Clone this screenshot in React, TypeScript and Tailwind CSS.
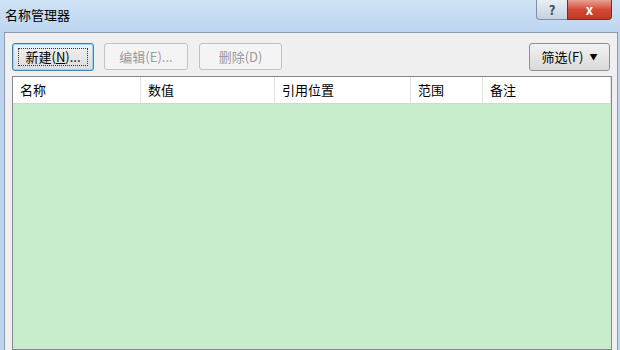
export default function App() {
  const cols = [
    { label: "名称", w: "w-[128px]" },
    { label: "数值", w: "w-[134px]" },
    { label: "引用位置", w: "w-[136px]" },
    { label: "范围", w: "w-[72px]" },
    { label: "备注", w: "flex-1" },
  ];

  return (
    <div
      className="w-[620px] h-[350px] overflow-hidden flex flex-col bg-[#bcd4ee] text-[13px] text-[#1e1e1e]"
      style={{ fontFamily: '"Noto Sans CJK SC", "Liberation Sans", sans-serif' }}
    >
      {/* Title bar */}
      <div className="h-[32px] shrink-0 flex items-start bg-gradient-to-b from-[#cfe2f5] to-[#bdd6f0]">
        <div className="pl-[5px] pt-[6px] text-[13px] leading-[18px] text-black">名称管理器</div>
        <div className="ml-auto mr-[8px] flex">
          <div className="w-[31px] h-[20px] rounded-bl-[4px] border border-[#7f8ea5] border-t-0 border-r-0 bg-gradient-to-b from-[#e9eef5] to-[#c6d2e0] flex items-center justify-center text-[13px] font-bold text-[#3a4a60]">
            ?
          </div>
          <div className="w-[45px] h-[20px] rounded-br-[4px] border border-[#7a2a20] border-t-0 bg-gradient-to-b from-[#e6a194] via-[#d24a35] to-[#c23a24] flex items-center justify-center text-[13px] font-bold text-white">
            x
          </div>
        </div>
      </div>

      {/* Dialog body */}
      <div className="flex-1 ml-[4px] mr-[2px] border-t border-l border-r border-[#8a9aaf] bg-[#f0f0f0] flex flex-col pl-[7px] pr-[5px] pt-[9px]">
        <div className="flex items-center h-[29px]">
          <button className="w-[82px] h-[28px] rounded-[3px] border border-[#3c7fb1] bg-gradient-to-b from-[#f2f2f2] to-[#dcdcdc] shadow-[inset_0_0_0_1px_#9ad7f2] flex items-center justify-center text-[13px] text-black">
            <span className="border border-dotted border-[#333] px-[6px] leading-[16px]">
              新建(<span className="underline">N</span>)...
            </span>
          </button>
          <button className="ml-[10px] w-[84px] h-[27px] rounded-[3px] border border-[#c2c2c2] bg-[#f4f4f4] text-[13px] text-[#9a9a9a]">
            编辑(E)...
          </button>
          <button className="ml-[11px] w-[83px] h-[27px] rounded-[3px] border border-[#c2c2c2] bg-[#f4f4f4] text-[13px] text-[#9a9a9a]">
            删除(D)
          </button>
          <button className="ml-auto mr-[2px] w-[81px] h-[28px] rounded-[3px] border border-[#8e8f8f] bg-gradient-to-b from-[#f2f2f2] to-[#dadada] flex items-center justify-center gap-[6px] text-[13px] text-black">
            <span>筛选(F)</span>
            <span className="text-[8px]">▼</span>
          </button>
        </div>

        {/* List */}
        <div className="mt-[5px] flex-1 border border-[#828790] flex flex-col">
          <div className="h-[27px] shrink-0 bg-white flex border-b border-[#d5d5d5]">
            {cols.map((c) => (
              <div
                key={c.label}
                className={`${c.w} h-full border-r border-[#e3e3e3] flex items-center pl-[7px] text-[13px] text-black`}
              >
                {c.label}
              </div>
            ))}
          </div>
          <div className="flex-1 bg-[#c7edcc]" />
        </div>
      </div>
    </div>
  );
}
